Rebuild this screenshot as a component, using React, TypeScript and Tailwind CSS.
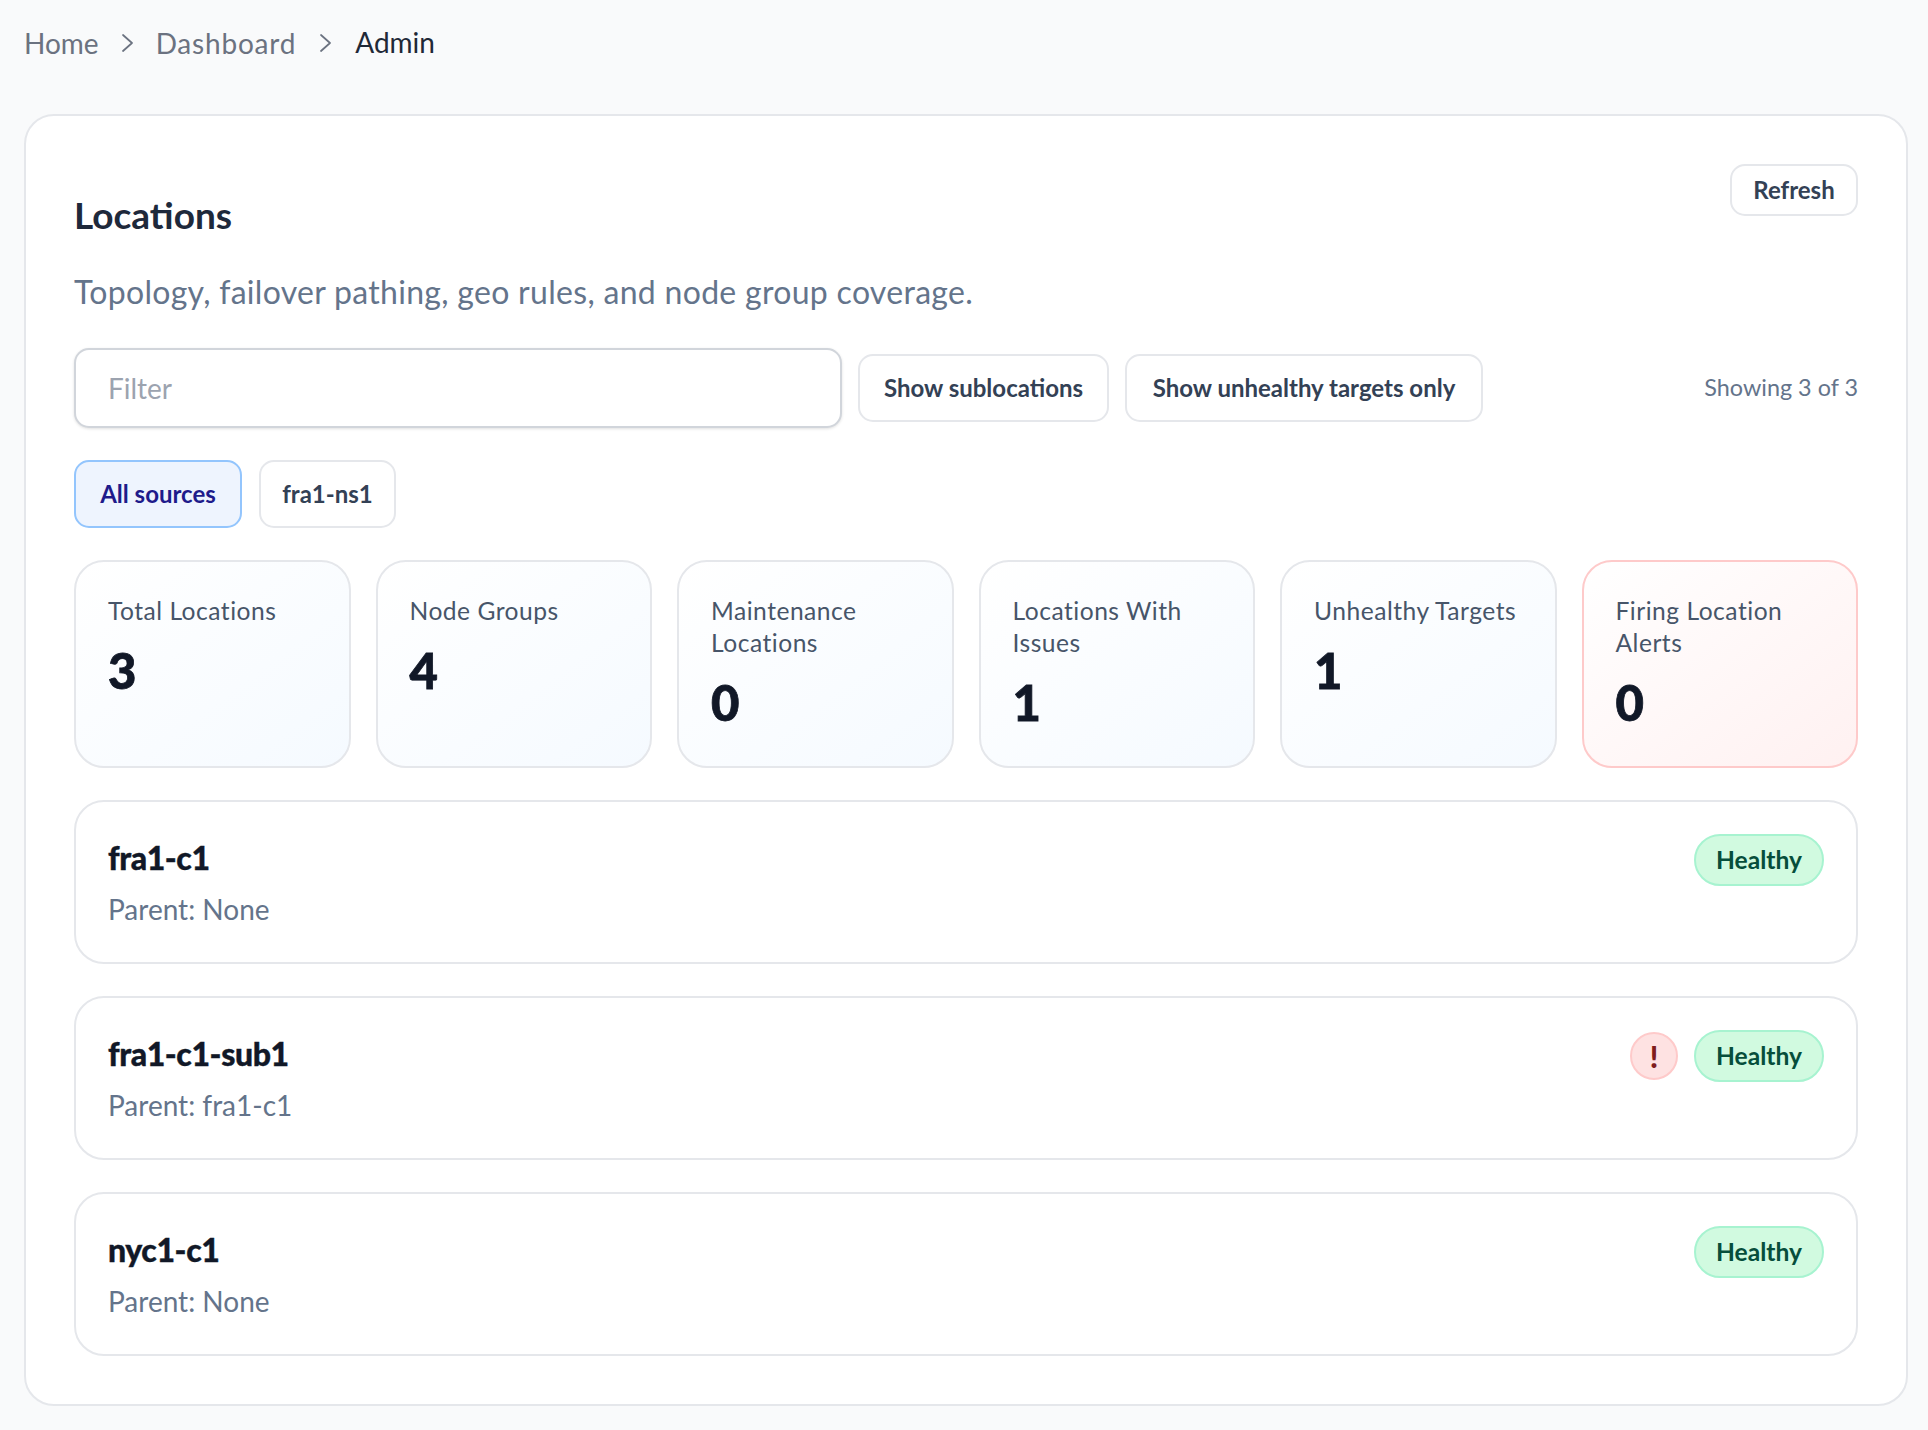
import React from 'react';

const stats = [
  { label: 'Total Locations', value: '3' },
  { label: 'Node Groups', value: '4' },
  { label: 'Maintenance Locations', value: '0' },
  { label: 'Locations With Issues', value: '1' },
  { label: 'Unhealthy Targets', value: '1' },
  { label: 'Firing Location Alerts', value: '0', alert: true },
];

const locations = [
  { name: 'fra1-c1', parent: 'None' },
  { name: 'fra1-c1-sub1', parent: 'fra1-c1', warn: true },
  { name: 'nyc1-c1', parent: 'None' },
];

function Chevron() {
  return (
    <svg width="13" height="18" viewBox="0 0 13 18" fill="none" className="text-[#6b7280]">
      <polyline points="2,1 11,9 2,17" stroke="currentColor" strokeWidth="1.7" strokeLinecap="round" strokeLinejoin="round" />
    </svg>
  );
}

function OutlineButton({ children, className }: { children: React.ReactNode; className: string }) {
  return (
    <button
      className={`flex items-center justify-center rounded-[15px] border-2 border-[#e5e7eb] bg-white text-[24px] font-bold text-[#334155] ${className}`}
    >
      {children}
    </button>
  );
}

export default function App() {
  return (
    <div className="min-h-[1430px] bg-[#f9fafb] pt-[24px] pr-[20px] pl-[24px] font-['Lato',sans-serif]">
      {/* Breadcrumb */}
      <nav className="flex h-[38px] items-center text-[28px] text-[#6b7280]">
        <span>Home</span>
        <span className="mx-[22px]"><Chevron /></span>
        <span className="tracking-[0.8px]">Dashboard</span>
        <span className="mx-[23px]"><Chevron /></span>
        <span className="-mt-[3px] text-[#1f2937]">Admin</span>
      </nav>

      <main className="mt-[52px] h-[1292px] rounded-[30px] border-2 border-[#e5e7eb] bg-white px-[48px] pt-[48px]">
        {/* Header */}
        <div className="flex h-[52px] items-start justify-between">
          <h1 className="mt-[29px] text-[37px] font-bold leading-[44px] text-[#1e293b]">Locations</h1>
          <OutlineButton className="h-[52px] w-[128px]">Refresh</OutlineButton>
        </div>
        <p className="mt-[56px] text-[32px] leading-[40px] tracking-[0.3px] text-[#64748b]">
          Topology, failover pathing, geo rules, and node group coverage.
        </p>

        {/* Filter row */}
        <div className="mt-[36px] flex h-[80px] items-center">
          <div className="flex h-[80px] w-[768px] items-center rounded-[15px] border-2 border-[#d1d5db] bg-white pl-[32px] text-[28px] text-[#9ca3af] shadow-[0_1px_3px_rgba(0,0,0,0.12)]">
            Filter
          </div>
          <OutlineButton className="ml-[16px] h-[68px] w-[251px]">Show sublocations</OutlineButton>
          <OutlineButton className="ml-[16px] h-[68px] w-[358px]">Show unhealthy targets only</OutlineButton>
          <span className="ml-auto text-[23.4px] text-[#64748b]">Showing 3 of 3</span>
        </div>

        {/* Sources */}
        <div className="mt-[32px] flex gap-[17px]">
          <button className="flex h-[68px] w-[168px] items-center justify-center rounded-[15px] border-2 border-[#93c5fd] bg-[#eef4fe] text-[24px] font-bold text-[#1e1b8b]">
            All sources
          </button>
          <OutlineButton className="h-[68px] w-[137px]">fra1-ns1</OutlineButton>
        </div>

        {/* Stats */}
        <div className="mt-[32px] grid grid-cols-6 gap-[25px]">
          {stats.map((s) => (
            <div
              key={s.label}
              className={
                s.alert
                  ? 'h-[208px] rounded-[30px] border-2 border-[#fecaca] bg-gradient-to-br from-white to-[#fff1f1] px-[32px] pt-[33px]'
                  : 'h-[208px] rounded-[30px] border-2 border-[#e5e7eb] bg-gradient-to-br from-white to-[#f5faff] px-[32px] pt-[33px]'
              }
            >
              <div className="text-[24.6px] leading-[32px] tracking-[0.5px] text-[#475569]">{s.label}</div>
              <div className="mt-[18px] text-[49px] font-black leading-[50px] text-[#111827] [-webkit-text-stroke:0.8px_#111827]">
                {s.value}
              </div>
            </div>
          ))}
        </div>

        {/* Location rows */}
        <div className="mt-[32px] flex flex-col gap-[32px]">
          {locations.map((l) => (
            <div
              key={l.name}
              className="flex h-[164px] items-start justify-between rounded-[30px] border-2 border-[#e5e7eb] bg-white px-[32px] pt-[32px]"
            >
              <div>
                <div className="mt-[2px] text-[32px] font-black leading-[44px] tracking-[-0.4px] text-[#111827] [-webkit-text-stroke:0.4px_#111827]">
                  {l.name}
                </div>
                <div className="mt-[9px] text-[28px] leading-[40px] text-[#64748b]">Parent: {l.parent}</div>
              </div>
              <div className="flex items-center gap-[16px]">
                {l.warn && (
                  <span className="flex h-[48px] w-[48px] items-center justify-center rounded-full border-2 border-[#fecaca] bg-[#fee2e2] text-[30px] font-black text-[#7f1d1d]">
                    !
                  </span>
                )}
                <span className="flex h-[52px] w-[130px] items-center justify-center rounded-full border-2 border-[#a7f3d0] bg-[#d1fae0] text-[24.6px] font-bold text-[#064e3b]">
                  Healthy
                </span>
              </div>
            </div>
          ))}
        </div>
      </main>
    </div>
  );
}
